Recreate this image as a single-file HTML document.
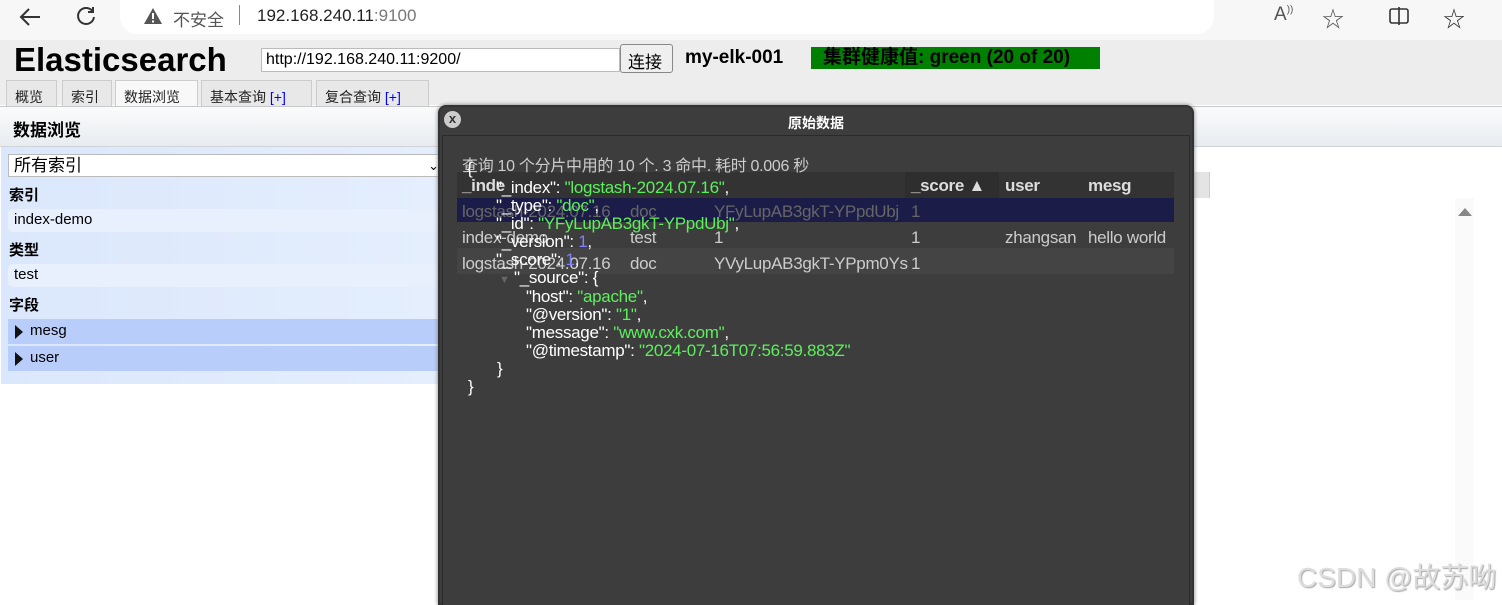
<!DOCTYPE html>
<html><head><meta charset="utf-8"><style>
*{margin:0;padding:0;box-sizing:border-box}
body{width:1502px;height:600px;overflow:hidden;background:#fff;font-family:"Liberation Sans","Noto Sans CJK SC",sans-serif;position:relative;color:#000}
.abs{position:absolute}
#bar{left:0;top:0;width:1502px;height:40px;background:#f7f7f7}
#pill{left:120px;top:0;width:1094px;height:34px;background:#fff;border-radius:0 0 17px 17px}
#hdr{left:0;top:40px;width:1502px;height:65px;background:#ededed}
.tab{top:80px;height:26px;border:1px solid #ccc;border-bottom:none;background:#e8e8e8;font-size:14px;padding:6px 0 0 8px;color:#222;white-space:nowrap}
#sec{left:0;top:106px;width:1502px;height:41px;background:linear-gradient(#fafbfc,#e8ecf0);border-top:1px solid #c8c8c8;border-bottom:1px solid #d0d4d8}
#left{left:1px;top:147px;width:437px;height:237px;background:linear-gradient(90deg,#dbe7fc,#e4eefd)}
.lbl{font-size:15px;font-weight:bold;left:8px}
.item{left:7px;width:430px;height:23px;background:#e8f0fe;border-radius:5px;font-size:15px;padding:2px 0 0 6px}
.fld{left:7px;width:438px;height:25px;background:#b8cdfa;font-size:15px;padding:3px 0 0 22px}
.tri{position:absolute;left:7px;top:6px;width:0;height:0;border-left:8px solid #111;border-top:7px solid transparent;border-bottom:7px solid transparent}
#dlg{left:438px;top:105px;width:756px;height:500px;background:#3d3d3d;border-radius:8px 8px 0 0;box-shadow:0 0 4px #777;border:2px solid #333}
.j{position:absolute;font-size:17px;color:#fff;white-space:pre;letter-spacing:-0.3px}
.g{color:#5cf05c}.n{color:#8080ff}
.t{position:absolute;font-size:17px;white-space:pre;letter-spacing:-0.3px}
</style></head><body>
<div id="bar" class="abs"></div>
<div id="pill" class="abs"></div>
<svg class="abs" style="left:18px;top:6px" width="26" height="22"><path d="M22 11H4M11 3L3 11l8 8" stroke="#333" stroke-width="2" fill="none"/></svg>
<svg class="abs" style="left:74px;top:4px" width="24" height="24"><path d="M19 8A8 8 0 1 0 20 13M19 3v5h-5" stroke="#333" stroke-width="2" fill="none"/></svg>
<svg class="abs" style="left:143px;top:7px" width="20" height="18"><path d="M10 1L19 17H1z" fill="#555"/><rect x="9" y="6" width="2" height="6" fill="#fff"/><rect x="9" y="13.5" width="2" height="2" fill="#fff"/></svg>
<div class="abs" style="left:173px;top:6px;font-size:17px;color:#555">不安全</div>
<div class="abs" style="left:239px;top:5px;width:1px;height:20px;background:#888"></div>
<div class="abs" style="left:257px;top:6px;font-size:17px;color:#222">192.168.240.11<span style="color:#777">:9100</span></div>
<div class="abs" style="left:1274px;top:4px;font-size:19px;color:#555">A<sup style="font-size:10px">))</sup></div>
<div class="abs" style="left:1322px;top:2px;font-size:22px;color:#555">☆</div>
<svg class="abs" style="left:1388px;top:6px" width="24" height="20"><rect x="2" y="3" width="18" height="14" rx="2" stroke="#333" stroke-width="1.6" fill="none"/><path d="M11 1v18" stroke="#333" stroke-width="1.6"/></svg>
<div class="abs" style="left:1443px;top:2px;font-size:22px;color:#333">☆</div>
<div id="hdr" class="abs"></div>
<div class="abs" style="left:14px;top:41px;font-size:33px;font-weight:bold">Elasticsearch</div>
<div class="abs" style="left:261px;top:48px;width:359px;height:24px;background:#fff;border:1px solid #bbb;font-size:16px;padding:2px 0 0 4px">http://192.168.240.11:9200/</div>
<div class="abs" style="left:620px;top:44px;width:53px;height:29px;background:#efefef;border:1px solid #888;border-radius:3px;font-size:17px;padding:3px 0 0 7px">连接</div>
<div class="abs" style="left:685px;top:47px;font-size:19px;font-weight:bold">my-elk-001</div>
<div class="abs" style="left:811px;top:47px;width:289px;height:22px;background:#008000;font-size:19px;font-weight:bold;padding:0 0 0 12px;line-height:22px;white-space:nowrap">集群健康值: green (20 of 20)</div>
<div class="tab abs" style="left:6px;width:51px">概览</div>
<div class="tab abs" style="left:62px;width:50px">索引</div>
<div class="tab abs" style="left:115px;width:83px;background:#f8f8f8;height:27px">数据浏览</div>
<div class="tab abs" style="left:201px;width:111px">基本查询 <span style="color:#00f">[+]</span></div>
<div class="tab abs" style="left:316px;width:113px">复合查询 <span style="color:#00f">[+]</span></div>
<div id="sec" class="abs"><div style="position:absolute;left:13px;top:9px;font-size:17px;font-weight:bold">数据浏览</div></div>
<div id="left" class="abs">
<div class="abs" style="left:7px;top:7px;width:436px;height:23px;background:#fff;border:1px solid #bbb;font-size:17px;line-height:21px;padding:0 0 0 5px">所有索引<span style="position:absolute;right:4px;top:0;font-size:13px">&#8964;</span></div>
<div class="lbl abs" style="top:37px">索引</div>
<div class="item abs" style="top:62px">index-demo</div>
<div class="lbl abs" style="top:92px">类型</div>
<div class="item abs" style="top:117px">test</div>
<div class="lbl abs" style="top:147px">字段</div>
<div class="fld abs" style="top:172px"><span class="tri"></span>mesg</div>
<div class="fld abs" style="top:199px"><span class="tri"></span>user</div>
</div>
<div class="abs" style="left:1180px;top:172px;width:30px;height:26px;background:#e4e4e4;border-right:1px solid #ccc"></div>
<div class="abs" style="left:1455px;top:198px;width:19px;height:402px;background:#fafafa"></div>
<div class="abs" style="left:1458px;top:208px;width:0;height:0;border-left:7px solid transparent;border-right:7px solid transparent;border-bottom:8px solid #888"></div>
<div class="abs" style="left:1297px;top:556px;font-size:28px;color:#ddd;text-shadow:1px 1px 1px #aaa">CSDN @故苏呦</div>
<div id="dlg" class="abs">
<div class="abs" style="left:4px;top:4px;width:17px;height:17px;border-radius:50%;background:#ccc;color:#333;font-size:13px;font-weight:bold;text-align:center;line-height:16px">x</div>
<div class="abs" style="left:0;top:6px;width:752px;text-align:center;color:#fff;font-size:14px;font-weight:bold">原始数据</div>
<div class="abs" style="left:2px;top:28px;width:748px;height:470px;border:1px solid #2a2a2a;border-bottom:none;background:#3d3d3d"></div>
<div class="abs" style="left:17px;top:65px;width:717px;height:26px;background:#333"></div>
<div class="abs" style="left:465px;top:65px;width:94px;height:26px;background:#2e2e2e"></div>
<div class="abs" style="left:17px;top:91px;width:717px;height:24px;background:#1c1c48"></div>
<div class="abs" style="left:17px;top:141px;width:717px;height:26px;background:#444"></div>
<div class="t" style="left:22px;top:45px;color:#ccc;font-size:16px">查询 10 个分片中用的 10 个. 3 命中. 耗时 0.006 秒</div>
<div class="t" style="left:22px;top:69px;color:#ddd;font-weight:bold">_inde</div>
<div class="t" style="left:471px;top:69px;color:#ddd;font-weight:bold">_score ▲</div>
<div class="t" style="left:565px;top:69px;color:#ddd;font-weight:bold">user</div>
<div class="t" style="left:648px;top:69px;color:#ddd;font-weight:bold">mesg</div>
<div class="t" style="left:22px;top:95px;color:#666">logstash-2024.07.16</div>
<div class="t" style="left:190px;top:95px;color:#666">doc</div>
<div class="t" style="left:274px;top:95px;color:#666">YFyLupAB3gkT-YPpdUbj</div>
<div class="t" style="left:471px;top:95px;color:#666">1</div>
<div class="t" style="left:22px;top:121px;color:#ccc">index-demo</div>
<div class="t" style="left:190px;top:121px;color:#ccc">test</div>
<div class="t" style="left:274px;top:121px;color:#ccc">1</div>
<div class="t" style="left:471px;top:121px;color:#ccc">1</div>
<div class="t" style="left:565px;top:121px;color:#ccc">zhangsan</div>
<div class="t" style="left:648px;top:121px;color:#ccc">hello world</div>
<div class="t" style="left:22px;top:147px;color:#ccc">logstash-2024.07.16</div>
<div class="t" style="left:190px;top:147px;color:#ccc">doc</div>
<div class="t" style="left:274px;top:147px;color:#ccc">YVyLupAB3gkT-YPpm0Ys</div>
<div class="t" style="left:471px;top:147px;color:#ccc">1</div>
<div class="j" style="left:27px;top:52px">{</div>
<div class="j" style="left:56px;top:71px">"_index": <span class="g">"logstash-2024.07.16"</span>,</div>
<div class="j" style="left:56px;top:89px">"_type": <span class="g">"doc"</span>,</div>
<div class="j" style="left:56px;top:107px">"_id": <span class="g">"YFyLupAB3gkT-YPpdUbj"</span>,</div>
<div class="j" style="left:56px;top:125px">"_version": <span class="n">1</span>,</div>
<div class="j" style="left:56px;top:143px">"_score": <span class="n">1</span>,</div>
<div class="j" style="left:59px;top:161px"><span style="color:#666;font-size:11px">▼</span> "_source": {</div>
<div class="j" style="left:86px;top:180px">"host": <span class="g">"apache"</span>,</div>
<div class="j" style="left:86px;top:198px">"@version": <span class="g">"1"</span>,</div>
<div class="j" style="left:86px;top:216px">"message": <span class="g">"www.cxk.com"</span>,</div>
<div class="j" style="left:86px;top:234px">"@timestamp": <span class="g">"2024-07-16T07:56:59.883Z"</span></div>
<div class="j" style="left:57px;top:252px">}</div>
<div class="j" style="left:28px;top:270px">}</div>
</div>
</body></html>
